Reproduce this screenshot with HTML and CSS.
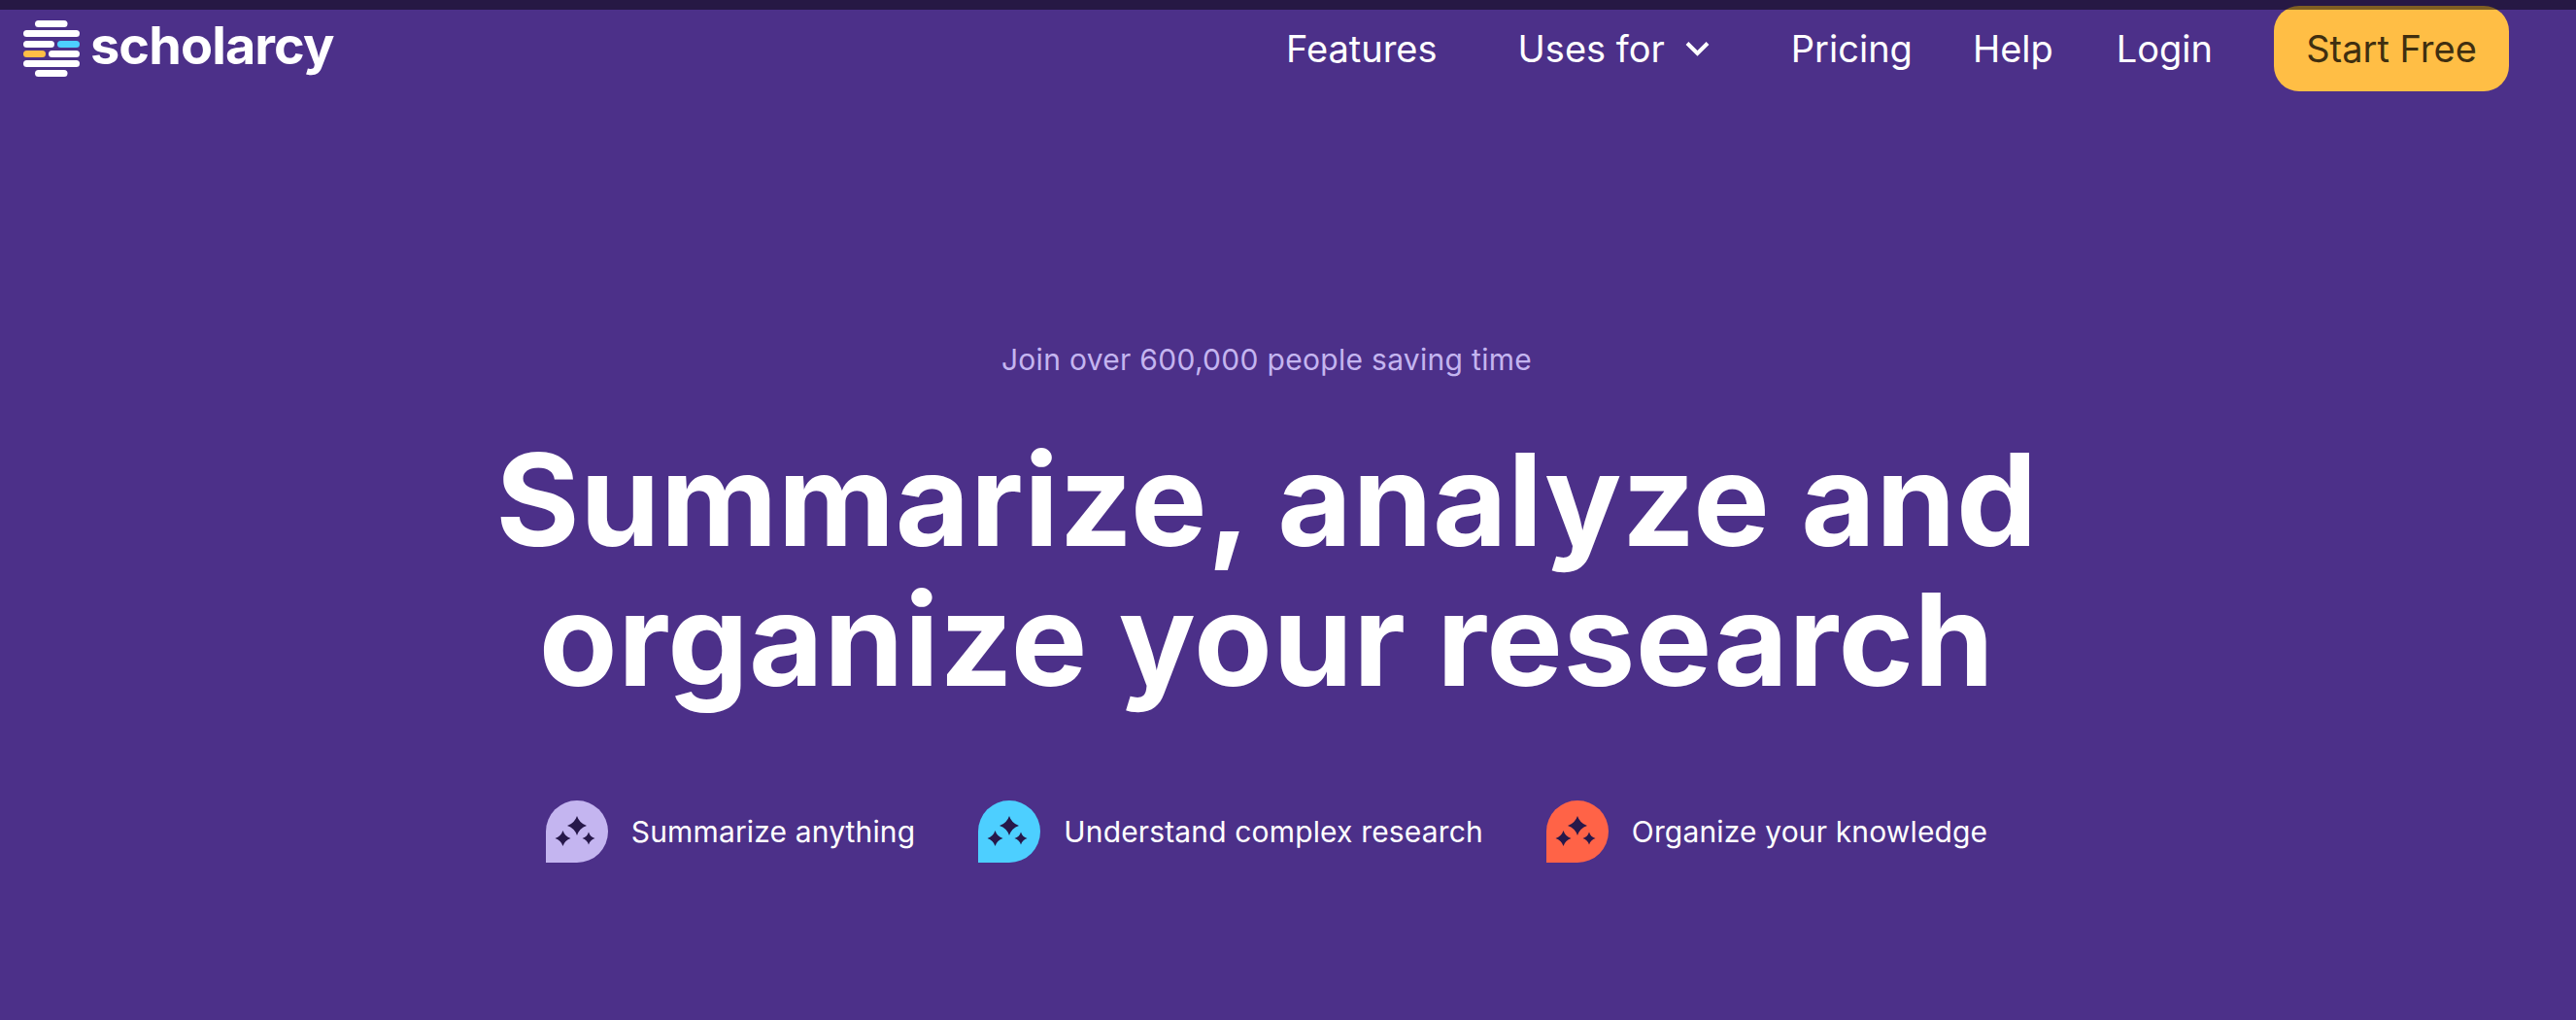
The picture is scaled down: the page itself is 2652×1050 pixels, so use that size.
FILE: index.html
```html
<!DOCTYPE html>
<html lang="en">
<head>
    <meta charset="UTF-8">
    <meta name="viewport" content="width=device-width, initial-scale=1.0">
    <title>Scholarcy</title>
    <link rel="stylesheet" href="styles.css">
</head>
<body>
    <div class="topline"></div>

    <header class="header">
        <a class="logo" href="#">
            <svg class="logo-mark" width="58" height="58" viewBox="0 0 58 58">
                <rect x="12" y="0" width="33.500" height="7" rx="3.500" fill="#fff"/>
                <rect x="0" y="10" width="58" height="7" rx="3.500" fill="#fff"/>
                <rect x="0" y="21" width="32" height="7" rx="3.500" fill="#fff"/>
                <rect x="35" y="21" width="23" height="7" rx="3.500" fill="#4dcfff"/>
                <rect x="0" y="31" width="23" height="7" rx="3.500" fill="#ffbe45"/>
                <rect x="26" y="31" width="32" height="7" rx="3.500" fill="#fff"/>
                <rect x="0" y="41" width="58" height="7" rx="3.500" fill="#fff"/>
                <rect x="12" y="51" width="33.500" height="7" rx="3.500" fill="#fff"/>
            </svg>
            <span class="logo-text">scholarcy</span>
        </a>
        <nav class="nav">
            <a class="nav-link nav-features" href="#">Features</a>
            <a class="nav-link nav-uses" href="#">Uses for
                <svg class="chevron" width="25" height="16" viewBox="0 0 25 16"><path d="M2 2.500l10.500 10.500 10.500-10.500" fill="none" stroke="#fff" stroke-width="4"/></svg>
            </a>
            <a class="nav-link nav-pricing" href="#">Pricing</a>
            <a class="nav-link nav-help" href="#">Help</a>
            <a class="nav-link" href="#">Login</a>
            <a class="start-btn" href="#">Start Free</a>
        </nav>
    </header>

    <main class="hero">
        <p class="hero-sub">Join over 600,000 people saving time</p>
        <h1 class="hero-title">Summarize, analyze and<br>organize your research</h1>
        <ul class="features">
            <li class="feature">
                <span class="bubble bubble-lilac">
                    <svg width="64" height="64" viewBox="0 0 64 64"><path class="star" d="M32 16Q34.500 23.500 42 26Q34.500 28.500 32 36Q29.500 28.500 22 26Q29.500 23.500 32 16zM17.500 31Q19.500 37 25.500 39Q19.500 41 17.500 47Q15.500 41 9.500 39Q15.500 37 17.500 31zM44 32.500Q45.500 37.500 50.500 39Q45.500 40.500 44 45.500Q42.500 40.500 37.500 39Q42.500 37.500 44 32.500z"/></svg>
                </span>
                Summarize anything
            </li>
            <li class="feature">
                <span class="bubble bubble-blue">
                    <svg width="64" height="64" viewBox="0 0 64 64"><path class="star" d="M32 16Q34.500 23.500 42 26Q34.500 28.500 32 36Q29.500 28.500 22 26Q29.500 23.500 32 16zM17.500 31Q19.500 37 25.500 39Q19.500 41 17.500 47Q15.500 41 9.500 39Q15.500 37 17.500 31zM44 32.500Q45.500 37.500 50.500 39Q45.500 40.500 44 45.500Q42.500 40.500 37.500 39Q42.500 37.500 44 32.500z"/></svg>
                </span>
                Understand complex research
            </li>
            <li class="feature">
                <span class="bubble bubble-red">
                    <svg width="64" height="64" viewBox="0 0 64 64"><path class="star" d="M32 16Q34.500 23.500 42 26Q34.500 28.500 32 36Q29.500 28.500 22 26Q29.500 23.500 32 16zM17.500 31Q19.500 37 25.500 39Q19.500 41 17.500 47Q15.500 41 9.500 39Q15.500 37 17.500 31zM44 32.500Q45.500 37.500 50.500 39Q45.500 40.500 44 45.500Q42.500 40.500 37.500 39Q42.500 37.500 44 32.500z"/></svg>
                </span>
                Organize your knowledge
            </li>
        </ul>
    </main>
</body>
</html>
```

FILE: styles.css
```css
html,
body {
  height: 100%;
  overflow: hidden;
}

body {
  margin: 0;
  background-color: #4c3089;
  color: #fff;
  font-family: "Inter", "Liberation Sans", sans-serif;
}

a {
  color: inherit;
  text-decoration: none;
}

/* dark strip lying over the top of the page */
.topline {
  position: absolute;
  top: 0;
  left: 0;
  right: 0;
  height: 10px;
  background: rgba(0, 0, 0, 0.5);
}

.header {
  display: flex;
  justify-content: space-between;
  align-items: flex-start;
  padding: 6px 69px 0 24px;
}

.logo {
  display: flex;
  align-items: flex-start;
  padding-top: 15px;
}

.logo-mark {
  display: block;
}

.logo-text {
  margin-left: 11px;
  margin-top: -6px;
  font-size: 54px;
  font-weight: 700;
  line-height: 64px;
  letter-spacing: -0.9px;
}

.nav {
  display: flex;
  align-items: center;
  height: 88px;
  font-size: 38px;
}

.nav-link {
  margin-right: 63px;
}

.nav-features {
  margin-right: 83px;
}

.nav-uses {
  display: flex;
  align-items: center;
  margin-right: 84px;
}

.nav-pricing {
  margin-right: 62px;
}

.nav-help {
  margin-right: 65px;
}

.chevron {
  margin-left: 21px;
}

.start-btn {
  display: flex;
  align-items: center;
  justify-content: center;
  width: 242px;
  height: 88px;
  border-radius: 26px;
  background: #ffbe45;
  color: #3f2f10;
}

.hero {
  padding: 256px 44px 0 0;
  text-align: center;
}

.hero-sub {
  margin: 0;
  font-size: 30px;
  line-height: 40px;
  letter-spacing: 0.3px;
  color: #c4b5f0;
}

.hero-title {
  margin: 52px 0 0;
  font-size: 132px;
  font-weight: 700;
  line-height: 144px;
  letter-spacing: 0.5px;
}

.features {
  display: flex;
  justify-content: center;
  gap: 65px;
  margin: 94px 0 0;
  padding: 0;
  list-style: none;
}

.feature {
  display: flex;
  align-items: center;
  gap: 24px;
  font-size: 30px;
  letter-spacing: 0.15px;
}

.bubble {
  display: block;
  width: 64px;
  height: 64px;
  border-radius: 50% 50% 50% 0;
}

.bubble svg {
  display: block;
}

.bubble-lilac {
  background: #c4b5f0;
}

.bubble-blue {
  background: #4dcfff;
}

.bubble-red {
  background: #ff6347;
}

.star {
  fill: #27184a;
}
```
